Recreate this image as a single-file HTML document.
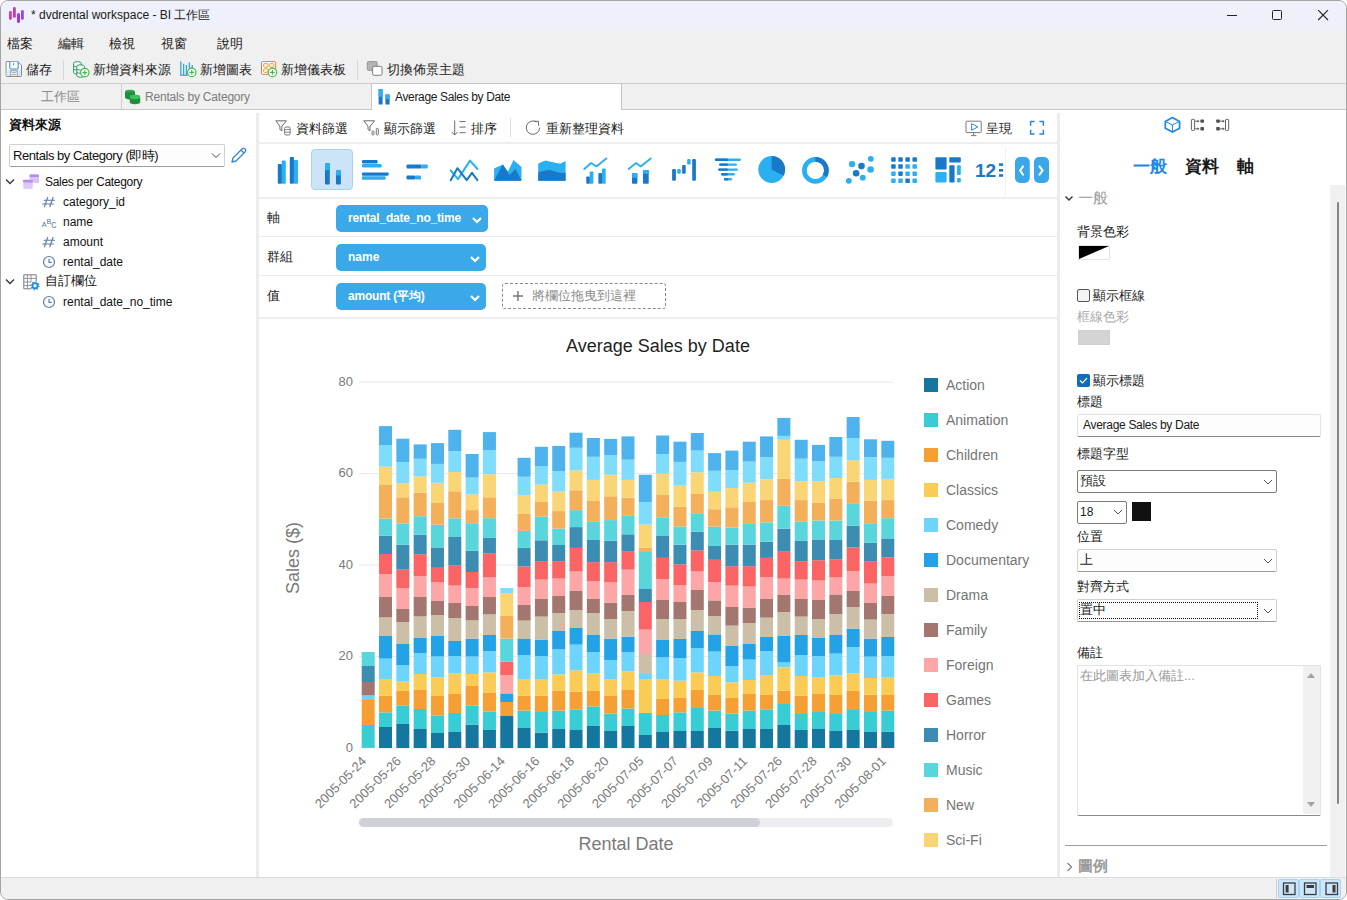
<!DOCTYPE html>
<html><head><meta charset="utf-8">
<style>
*{box-sizing:border-box;margin:0;padding:0}
html,body{width:1347px;height:900px;overflow:hidden;background:#fff}
body{font-family:"Liberation Sans",sans-serif;font-size:13px;color:#1a1a1a;position:relative}
.a{position:absolute;white-space:nowrap;line-height:1}
svg{position:absolute;overflow:visible}
.sel{position:absolute;background:#fdfdfd;border:1px solid #a8a8a8;border-radius:2px}
.chev{position:absolute;width:7px;height:7px;border-right:1px solid #555;border-bottom:1px solid #555;transform:rotate(45deg)}
</style></head><body>

<!-- window frame -->
<div class="a" style="left:0;top:0;width:1347px;height:900px;background:#fff"></div><div class="a" style="left:0;top:0;width:1347px;height:900px;background:#f0f0f0;border:1px solid #a5a5a5;border-radius:8px"></div>
<div class="a" style="left:1px;top:1px;width:1345px;height:30px;background:#eef1f9;border-radius:7px 7px 0 0"></div>
<!-- app icon -->
<svg width="1" height="1" style="left:0;top:0">
<rect x="9" y="11" width="2.8" height="9" rx="1.4" fill="#d83aa8"/>
<rect x="13" y="7" width="2.8" height="10.8" rx="1.4" fill="#c03ab8"/>
<rect x="17" y="13" width="3" height="10" rx="1.5" fill="#a834e0"/>
<rect x="21" y="10" width="2.8" height="9.8" rx="1.4" fill="#9048e8"/>
</svg>
<div class="a" style="left:31px;top:9px;font-size:12px;color:#1a1a1a">* dvdrental workspace - BI 工作區</div>
<!-- window controls -->
<div class="a" style="left:1227px;top:15px;width:10px;height:1px;background:#222"></div>
<div class="a" style="left:1272px;top:10px;width:10px;height:10px;border:1px solid #222;border-radius:1.5px"></div>
<svg width="14" height="14" style="left:1316px;top:8px"><path d="M2.2 2.2L12 12M12 2.2L2.2 12" stroke="#222" stroke-width="1.1"/></svg>
<!-- menu -->
<div class="a" style="left:7px;top:37px;font-size:13px">檔案</div>
<div class="a" style="left:58px;top:37px;font-size:13px">編輯</div>
<div class="a" style="left:109px;top:37px;font-size:13px">檢視</div>
<div class="a" style="left:161px;top:37px;font-size:13px">視窗</div>
<div class="a" style="left:217px;top:37px;font-size:13px">說明</div>
<!-- toolbar -->
<svg width="1" height="1" style="left:0;top:0">
<path d="M7 61.5H17.8L21.5 65.2V75.6Q21.5 76.5 20.6 76.5H7Q6.1 76.5 6.1 75.6V62.4Q6.1 61.5 7 61.5Z" fill="#fff" stroke="#8a8a8a" stroke-width="1"/>
<path d="M6.6 69.5H21V76H6.6Z" fill="#cdeefc"/>
<path d="M9.8 61.8V67.6Q9.8 69 11.2 69H16.8Q18.2 69 18.2 67.6V61.8" fill="#fff" stroke="#3b8fd8" stroke-width="1.1"/>
<path d="M13.6 63.2V65.2" stroke="#3b8fd8" stroke-width="1"/>
<rect x="10.8" y="70.8" width="6.4" height="5.5" fill="#fff" stroke="#8a8a8a" stroke-width="0.9"/>
<path d="M12.2 72.6H15.8M12.2 74.6H15.8" stroke="#8a8a8a" stroke-width="0.8"/>
</svg>
<div class="a" style="left:26px;top:63px;font-size:13px">儲存</div>
<div class="a" style="left:63px;top:60px;width:1px;height:20px;background:#d8d8d8"></div>
<svg width="1" height="1" style="left:0;top:0">
<path d="M73.6 63.2Q73.6 61.6 77.4 61.6Q81.2 61.6 81.2 63.2V72.6Q81.2 74.2 77.4 74.2Q73.6 74.2 73.6 72.6Z" fill="#eef5ef" stroke="#2f9a6a" stroke-width="1"/>
<path d="M73.6 66.2Q77.4 67.8 81.2 66.2M73.6 69.4Q77.4 71 81.2 69.4" fill="none" stroke="#2f9a6a" stroke-width="0.9"/>
<path d="M76.8 66.4Q76.8 64.8 80.6 64.8Q84.4 64.8 84.4 66.4V75.6Q84.4 77.2 80.6 77.2Q76.8 77.2 76.8 75.6Z" fill="#eef5ef" stroke="#2f9a6a" stroke-width="1"/>
<path d="M76.8 69.4Q80.6 71 84.4 69.4M76.8 72.6Q80.6 74.2 84.4 72.6" fill="none" stroke="#2f9a6a" stroke-width="0.9"/>
<circle cx="84.8" cy="72.6" r="4.2" fill="#fff" stroke="#46b94e" stroke-width="1.2"/>
<path d="M84.8 70.2V75M82.4 72.6H87.2" stroke="#46b94e" stroke-width="1.2"/>
</svg>
<div class="a" style="left:93px;top:63px;font-size:13px">新增資料來源</div>
<svg width="1" height="1" style="left:0;top:0">
<path d="M180.8 61.5V75M183.6 63.8V75M186.4 65V75M189.4 62.6V72M192.2 65V69" stroke="#33a6e6" stroke-width="1.3"/>
<path d="M180.2 75.2H188" stroke="#2f86d6" stroke-width="1"/>
<circle cx="191.8" cy="72.4" r="4.2" fill="#fff" stroke="#46b94e" stroke-width="1.2"/>
<path d="M191.8 70V74.8M189.4 72.4H194.2" stroke="#46b94e" stroke-width="1.2"/>
</svg>
<div class="a" style="left:200px;top:63px;font-size:13px">新增圖表</div>
<svg width="1" height="1" style="left:0;top:0">
<rect x="261.5" y="61.6" width="14.2" height="12.8" rx="1" fill="#fff" stroke="#e8784a" stroke-width="1"/>
<rect x="263.6" y="63.6" width="4.4" height="3.6" rx="0.8" fill="#fff3c8" stroke="#e89a40" stroke-width="0.9"/>
<rect x="269.4" y="63.6" width="4.4" height="3.6" rx="0.8" fill="#fff3c8" stroke="#e89a40" stroke-width="0.9"/>
<rect x="263.6" y="68.8" width="4.4" height="3.6" rx="0.8" fill="#fff3c8" stroke="#e89a40" stroke-width="0.9"/>
<circle cx="272.4" cy="72.4" r="4.2" fill="#fff" stroke="#46b94e" stroke-width="1.2"/>
<path d="M272.4 70V74.8M270 72.4H274.8" stroke="#46b94e" stroke-width="1.2"/>
</svg>
<div class="a" style="left:281px;top:63px;font-size:13px">新增儀表板</div>
<div class="a" style="left:357px;top:60px;width:1px;height:20px;background:#d8d8d8"></div>
<svg width="1" height="1" style="left:0;top:0">
<rect x="367.3" y="61.6" width="9.8" height="8.8" rx="1.2" fill="#b4b4b4" stroke="#8e8e8e" stroke-width="0.9"/>
<rect x="372.6" y="66.3" width="9.4" height="9" rx="1.6" fill="#fff" stroke="#7a7a7a" stroke-width="1"/>
</svg>
<div class="a" style="left:387px;top:63px;font-size:13px">切換佈景主題</div>
<!-- tabs -->
<div class="a" style="left:1px;top:83px;width:1345px;height:1px;background:#cfcfcf"></div>
<div class="a" style="left:1px;top:109px;width:1345px;height:1px;background:#c6c6c6"></div>
<div class="a" style="left:121px;top:84px;width:1px;height:25px;background:#d0d0d0"></div>
<div class="a" style="left:41px;top:90px;font-size:13px;color:#8a8a8a">工作區</div>
<svg width="18" height="16" style="left:124px;top:89px"><ellipse cx="6" cy="3" rx="5" ry="2.2" fill="#2aa84a"/><path d="M1 3V9Q6 12 11 9V3" fill="#1f8f3e"/><ellipse cx="11" cy="8" rx="5.2" ry="2.2" fill="#34b552"/><path d="M5.8 8V14Q11 16.5 16.2 14V8" fill="#1f8f3e"/><ellipse cx="11" cy="8" rx="5.2" ry="2.2" fill="#3cc060"/></svg>
<div class="a" style="left:145px;top:91px;font-size:12px;color:#7c7c7c;letter-spacing:-0.2px">Rentals by Category</div>
<div class="a" style="left:371px;top:83px;width:251px;height:27px;background:#fff;border:1px solid #c6c6c6;border-bottom:none"></div>
<svg width="1" height="1" style="left:0;top:0">
<rect x="378.6" y="89" width="4" height="15.5" fill="#1a78c8"/><rect x="378.6" y="89" width="4" height="7.7" fill="#33b0f0"/>
<rect x="385.4" y="94.5" width="4.2" height="10" fill="#1a78c8"/><rect x="385.4" y="94.5" width="4.2" height="4.5" fill="#33b0f0"/>
</svg>
<div class="a" style="left:395px;top:91px;font-size:12px;color:#1a1a1a;letter-spacing:-0.35px">Average Sales by Date</div>
<!-- main white -->
<div class="a" style="left:1px;top:110px;width:1345px;height:767px;background:#fff"></div>
<!-- status bar -->
<div class="a" style="left:1px;top:877px;width:1345px;height:22px;background:#f0f0f0;border-top:1px solid #dcdcdc;border-radius:0 0 7px 7px"></div>
<div class="a" style="left:1276px;top:879px;width:1px;height:19px;background:#d0d0d0"></div>
<div class="a" style="left:1278px;top:879px;width:21px;height:19px;background:#cce6fb;border:1px solid #a6d2f4;border-radius:2px"></div>
<div class="a" style="left:1299px;top:879px;width:21px;height:19px;background:#cce6fb;border:1px solid #a6d2f4;border-radius:2px"></div>
<div class="a" style="left:1320px;top:879px;width:21px;height:19px;background:#cce6fb;border:1px solid #a6d2f4;border-radius:2px"></div>
<svg width="1" height="1" style="left:0;top:0">
<rect x="1283.5" y="883" width="11.5" height="11.5" fill="none" stroke="#3c3c3c" stroke-width="1.3"/><rect x="1285.6" y="885" width="3" height="7.5" fill="#3c3c3c"/>
<rect x="1304.5" y="883" width="11.5" height="11.5" fill="none" stroke="#3c3c3c" stroke-width="1.3"/><rect x="1306.5" y="885" width="7.5" height="3" fill="#3c3c3c"/>
<rect x="1326" y="883" width="11.5" height="11.5" fill="none" stroke="#3c3c3c" stroke-width="1.3"/><rect x="1332.5" y="885" width="3" height="7.5" fill="#3c3c3c"/>
</svg>
<!-- end status -->

<!-- left panel -->
<div class="a" style="left:256px;top:113px;width:3px;height:764px;background:#ececec"></div>
<div class="a" style="left:9px;top:118px;font-size:13px;font-weight:bold;color:#111">資料來源</div>
<div class="sel" style="left:9px;top:144px;width:216px;height:23px;border-color:#d0d0d0;border-bottom-color:#9a9a9a;background:#fdfdfd"></div>
<div class="a" style="left:13px;top:149px;font-size:13px;color:#111;letter-spacing:-0.45px">Rentals by Category (即時)</div>
<svg width="12" height="8" style="left:211px;top:152px"><path d="M1 1.5L5 5.5L9 1.5" fill="none" stroke="#444" stroke-width="1"/></svg>
<svg width="18" height="18" style="left:230px;top:147px"><path d="M2 15L3 11L12.5 1.5Q13.5 0.8 14.5 1.5L15.5 2.5Q16.2 3.5 15.5 4.5L6 14Z" fill="none" stroke="#2f86d6" stroke-width="1.3" stroke-linejoin="round"/><path d="M11 3L14 6" stroke="#2f86d6" stroke-width="1.2"/></svg>
<!-- tree -->
<svg width="10" height="8" style="left:5px;top:178px"><path d="M1 1.5L5 5.5L9 1.5" fill="none" stroke="#333" stroke-width="1.3"/></svg>
<svg width="1" height="1" style="left:0;top:0">
<rect x="29.5" y="174.5" width="9.5" height="8.6" rx="1.6" fill="#d9c3f3"/>
<rect x="29.5" y="174.5" width="9.5" height="2.4" rx="1" fill="#b58ae6"/>
<rect x="23" y="179.8" width="10" height="9.4" rx="1.6" fill="#dcc8f5" stroke="#fff" stroke-width="0.6"/>
<rect x="23" y="179.8" width="10" height="2.6" rx="1" fill="#b88de8"/>
<path d="M47.8 197L44.3 207.3M53.2 197L49.7 207.3M43.6 200.3H55M42.3 204H53.7" stroke="#5d7ea6" stroke-width="1.1" fill="none"/>
<path d="M47.8 237L44.3 247.3M53.2 237L49.7 247.3M43.6 240.3H55M42.3 244H53.7" stroke="#5d7ea6" stroke-width="1.1" fill="none"/>
<text x="41.8" y="227" font-family="Liberation Mono" font-size="8" fill="#5d7ea6">A</text>
<text x="46.6" y="224" font-family="Liberation Mono" font-size="8" fill="#5d7ea6">B</text>
<text x="51.2" y="228.3" font-family="Liberation Mono" font-size="8.5" fill="#5d7ea6">C</text>
</svg>
<div class="a" style="left:45px;top:176px;font-size:12px;color:#111;letter-spacing:-0.3px">Sales per Category</div>
<div class="a" style="left:63px;top:196px;font-size:12px;color:#111">category_id</div>
<div class="a" style="left:63px;top:216px;font-size:12px;color:#111">name</div>
<div class="a" style="left:63px;top:236px;font-size:12px;color:#111">amount</div>
<svg width="14" height="14" style="left:42px;top:255px"><circle cx="7" cy="7" r="5.5" fill="none" stroke="#5a7ea8" stroke-width="1.2"/><path d="M7 3.8V7.3H9.8" fill="none" stroke="#5a7ea8" stroke-width="1.2"/></svg>
<div class="a" style="left:63px;top:256px;font-size:12px;color:#111">rental_date</div>
<svg width="10" height="8" style="left:5px;top:278px"><path d="M1 1.5L5 5.5L9 1.5" fill="none" stroke="#333" stroke-width="1.3"/></svg>
<svg width="1" height="1" style="left:0;top:0">
<path d="M23.8 274.8H36.2V281M23.8 274.8V288.8H31" fill="none" stroke="#7a7a7a" stroke-width="1"/>
<path d="M23.8 278.4H36.2M23.8 282H31M23.8 285.5H31M27.4 274.8V288.8M31 274.8V282" stroke="#8a8a8a" stroke-width="0.9"/>
<circle cx="35" cy="285.8" r="2.6" fill="none" stroke="#1e88e5" stroke-width="1.8"/>
<circle cx="35" cy="285.8" r="4" fill="none" stroke="#1e88e5" stroke-width="1.2" stroke-dasharray="1.4 1.74"/>
</svg>
<div class="a" style="left:45px;top:274px;font-size:13px;color:#111">自訂欄位</div>
<svg width="14" height="14" style="left:42px;top:295px"><circle cx="7" cy="7" r="5.5" fill="none" stroke="#5a7ea8" stroke-width="1.2"/><path d="M7 3.8V7.3H9.8" fill="none" stroke="#5a7ea8" stroke-width="1.2"/></svg>
<div class="a" style="left:63px;top:296px;font-size:12px;color:#111">rental_date_no_time</div>

<!-- center toolbar -->
<svg width="1347" height="900" style="left:0;top:0">
<path d="M275.8 120.8H286.4L281.9 126.2V130.8L279.9 129.5V126.2Z" fill="none" stroke="#6a6a6a" stroke-width="1" stroke-linejoin="round"/>
<rect x="284.6" y="127" width="5.6" height="8" rx="1.5" fill="#fff" stroke="#6a6a6a" stroke-width="0.9"/>
<path d="M284.8 129.6H290M284.8 132.2H290" stroke="#6a6a6a" stroke-width="0.8"/>
<path d="M363.8 120.8H374.6L370 126.2V130.8L368 129.5V126.2Z" fill="none" stroke="#6a6a6a" stroke-width="1" stroke-linejoin="round"/>
<rect x="372" y="131" width="2" height="4" rx="0.8" fill="none" stroke="#6a6a6a" stroke-width="0.9"/>
<rect x="376.3" y="128.3" width="2" height="6.7" rx="0.8" fill="none" stroke="#6a6a6a" stroke-width="0.9"/>
<path d="M454.7 120.5V135M451.8 132L454.7 135L457.6 132" fill="none" stroke="#6a6a6a" stroke-width="1"/>
<path d="M459.5 121.6H465.6M459.5 127.1H465.6M459.5 132.7H465.6" stroke="#6a6a6a" stroke-width="1"/>
<path d="M539.6 127.7A6.7 6.7 0 1 1 536.5 122" fill="none" stroke="#6a6a6a" stroke-width="1"/>
<path d="M534 121.2L538.5 121.3L538.6 125.8" fill="none" stroke="#6a6a6a" stroke-width="1"/>
<rect x="966" y="121.2" width="15.2" height="11.4" rx="0.8" fill="none" stroke="#7a7a7a" stroke-width="1"/>
<path d="M973.6 132.8V135.5M971 135.6H976.4" stroke="#7a7a7a" stroke-width="1"/>
<path d="M971.6 123.6V130.2L977.8 126.9Z" fill="none" stroke="#2f86d6" stroke-width="1" stroke-linejoin="round"/>
<path d="M1030.6 125.8V121.6H1034.6M1039.4 121.6H1043.4V125.8M1043.4 129.8V134H1039.4M1034.6 134H1030.6V129.8" fill="none" stroke="#2f86d6" stroke-width="1.5"/>
<rect x="510" y="118" width="1" height="19" fill="#dedede"/>
</svg>
<div class="a" style="left:296px;top:122px;font-size:13px">資料篩選</div>
<div class="a" style="left:384px;top:122px;font-size:13px">顯示篩選</div>
<div class="a" style="left:471px;top:122px;font-size:13px">排序</div>
<div class="a" style="left:546px;top:122px;font-size:13px">重新整理資料</div>
<div class="a" style="left:986px;top:122px;font-size:13px">呈現</div>
<div class="a" style="left:1057px;top:113px;width:3px;height:764px;background:#ececec"></div>
<div class="a" style="left:259px;top:142px;width:798px;height:2px;background:#eeeeee"></div>
<div class="a" style="left:259px;top:197px;width:798px;height:2px;background:#eeeeee"></div>
<!-- chart types -->
<div class="a" style="left:311px;top:149px;width:42px;height:41px;background:#cce4f7;border:1px solid #a9d1f2;border-radius:4px"></div>
<svg width="1347" height="900" style="left:0;top:0">
<g>
<rect x="277.8" y="164" width="4.2" height="19.7" rx="1" fill="#1a78c8"/>
<rect x="281.7" y="160.5" width="4.1" height="23.2" rx="1" fill="#2ab0f0"/>
<rect x="289.8" y="157" width="4.2" height="26.7" rx="1" fill="#1a78c8"/>
<rect x="293.8" y="160" width="4.2" height="23.7" rx="1" fill="#2ab0f0"/>
</g>
<g>
<rect x="325" y="163" width="4.8" height="21.5" rx="1" fill="#1a78c8"/>
<rect x="325" y="163" width="4.8" height="7.3" rx="1" fill="#2ab0f0"/>
<rect x="336" y="170.3" width="4.9" height="14.2" rx="1" fill="#1a78c8"/>
<rect x="336" y="170.3" width="4.9" height="5.3" rx="1" fill="#2ab0f0"/>
</g>
<g>
<rect x="362" y="160" width="15.6" height="3.4" rx="1" fill="#1a78c8"/>
<rect x="362" y="164" width="19.7" height="3.6" rx="1" fill="#2ab0f0"/>
<rect x="362" y="172.4" width="26.6" height="3.4" rx="1" fill="#1a78c8"/>
<rect x="362" y="176.3" width="23.6" height="3.4" rx="1" fill="#2ab0f0"/>
</g>
<g>
<rect x="406.5" y="164.6" width="15" height="3.9" rx="1" fill="#1a78c8"/>
<rect x="421.2" y="164.6" width="6.6" height="3.9" rx="1" fill="#2ab0f0"/>
<rect x="406.5" y="175.5" width="8.7" height="4" rx="1" fill="#1a78c8"/>
<rect x="415" y="175.5" width="6" height="4" rx="1" fill="#2ab0f0"/>
</g>
<path d="M450.7 170.4L458 179.1L470 160.6L477.4 169" fill="none" stroke="#2ab0f0" stroke-width="2" stroke-linejoin="round" stroke-linecap="round"/>
<path d="M450.7 180.2L457.4 168.2L466.7 180.2L472 172.8L477.4 180.2" fill="none" stroke="#1a78c8" stroke-width="2" stroke-linejoin="round" stroke-linecap="round"/>
<path d="M494.1 168.4L502.8 164.4L508 171.5L513.5 160L521.5 167V180.8H494.1Z" fill="#2ab0f0"/>
<path d="M494.1 180.8L502.8 164.4L509.5 175L515.5 169L521.5 180.8Z" fill="#1a78c8"/>
<path d="M538.2 163.7Q541 161.5 545.6 160.4Q553 162 560.3 163.7Q563 162 565.6 161.3V180.8H538.2Z" fill="#2ab0f0"/>
<path d="M538.2 172.4Q544 170.6 549.6 170.1Q555 171.8 560.3 173.1L565.6 172.8V180.8H538.2Z" fill="#1a78c8"/>
<path d="M584.3 169L591 163L596.4 166.4L606.4 158.4" fill="none" stroke="#2ab0f0" stroke-width="1.9" stroke-linecap="round" stroke-linejoin="round"/>
<rect x="586.3" y="176.4" width="3.6" height="7.4" rx="0.8" fill="#1a78c8"/>
<rect x="589.7" y="171.5" width="3.7" height="12.3" rx="0.8" fill="#2ab0f0"/>
<rect x="598.4" y="173" width="3.6" height="10.8" rx="0.8" fill="#1a78c8"/>
<rect x="602" y="168.4" width="3.7" height="15.4" rx="0.8" fill="#2ab0f0"/>
<path d="M628.7 169L636 163L640.7 166.4L650.7 158.4" fill="none" stroke="#2ab0f0" stroke-width="1.9" stroke-linecap="round" stroke-linejoin="round"/>
<rect x="632" y="173.3" width="5.4" height="10.5" rx="0.8" fill="#1a78c8"/>
<rect x="632" y="173.3" width="5.4" height="4.4" rx="0.8" fill="#2ab0f0"/>
<rect x="643" y="170" width="5.7" height="13.8" rx="0.8" fill="#1a78c8"/>
<rect x="643" y="170" width="5.7" height="3.7" rx="0.8" fill="#2ab0f0"/>
<rect x="672.1" y="169" width="3.8" height="11.8" rx="1.2" fill="#1a78c8"/>
<rect x="677.2" y="169" width="3.6" height="4.7" rx="1.2" fill="#2ab0f0"/>
<rect x="682.1" y="165" width="3.6" height="8.7" rx="1.2" fill="#1a78c8"/>
<rect x="687.2" y="159" width="3.4" height="5.4" rx="1.2" fill="#2ab0f0"/>
<rect x="692.2" y="159" width="3.7" height="21.8" rx="1.2" fill="#1a78c8"/>
<rect x="714.9" y="158.4" width="26" height="2.5" rx="1.2" fill="#2ab0f0"/><rect x="714.9" y="158.4" width="13.1" height="2.5" rx="1.2" fill="#1a78c8"/>
<rect x="719.2" y="163.4" width="17.8" height="2.4" rx="1.2" fill="#2ab0f0"/><rect x="719.2" y="163.4" width="8.8" height="2.4" rx="1.2" fill="#1a78c8"/>
<rect x="718.2" y="168.4" width="19.7" height="2.4" rx="1.2" fill="#2ab0f0"/><rect x="718.2" y="168.4" width="9.8" height="2.4" rx="1.2" fill="#1a78c8"/>
<rect x="721.2" y="173" width="13.7" height="2.5" rx="1.2" fill="#2ab0f0"/><rect x="721.2" y="173" width="6.8" height="2.5" rx="1.2" fill="#1a78c8"/>
<rect x="724" y="178.1" width="8" height="2.4" rx="1.2" fill="#2ab0f0"/><rect x="724" y="178.1" width="4" height="2.4" rx="1.2" fill="#1a78c8"/>
<circle cx="771.7" cy="169.5" r="13.4" fill="#2ab0f0"/>
<path d="M771.7 169.5V156.1A13.4 13.4 0 0 1 783.5 175.8Z" fill="#1a78c8"/>
<circle cx="815.4" cy="170.4" r="11" fill="none" stroke="#2ab0f0" stroke-width="4.7"/>
<path d="M815.4 159.4A11 11 0 0 1 824.9 175.9" fill="none" stroke="#1a78c8" stroke-width="4.7"/>
<circle cx="870.8" cy="158.8" r="2.9" fill="#2ab0f0"/>
<circle cx="852.1" cy="164.1" r="3.2" fill="#2ab0f0"/>
<circle cx="861.5" cy="166.1" r="3.3" fill="#1a78c8"/>
<circle cx="870.6" cy="169.5" r="3.3" fill="#2ab0f0"/>
<circle cx="856.1" cy="173.3" r="3.3" fill="#1a78c8"/>
<circle cx="862.8" cy="177.7" r="2.9" fill="#2ab0f0"/>
<circle cx="848.8" cy="180.8" r="2.9" fill="#2ab0f0"/>
<rect x="891.20" y="157.30" width="4.5" height="4.5" rx="0.8" fill="#1a78c8"/><rect x="898.28" y="157.30" width="4.5" height="4.5" rx="0.8" fill="#1a78c8"/><rect x="905.36" y="157.30" width="4.5" height="4.5" rx="0.8" fill="#1a78c8"/><rect x="912.44" y="157.30" width="4.5" height="4.5" rx="0.8" fill="#1a78c8"/><rect x="891.20" y="164.35" width="4.5" height="4.5" rx="0.8" fill="#1a78c8"/><rect x="898.28" y="164.35" width="4.5" height="4.5" rx="0.8" fill="#1a78c8"/><rect x="905.36" y="164.35" width="4.5" height="4.5" rx="0.8" fill="#2ab0f0"/><rect x="912.44" y="164.35" width="4.5" height="4.5" rx="0.8" fill="#2ab0f0"/><rect x="891.20" y="171.40" width="4.5" height="4.5" rx="0.8" fill="#2ab0f0"/><rect x="898.28" y="171.40" width="4.5" height="4.5" rx="0.8" fill="#1a78c8"/><rect x="905.36" y="171.40" width="4.5" height="4.5" rx="0.8" fill="#2ab0f0"/><rect x="912.44" y="171.40" width="4.5" height="4.5" rx="0.8" fill="#2ab0f0"/><rect x="891.20" y="178.45" width="4.5" height="4.5" rx="0.8" fill="#2ab0f0"/><rect x="898.28" y="178.45" width="4.5" height="4.5" rx="0.8" fill="#2ab0f0"/><rect x="905.36" y="178.45" width="4.5" height="4.5" rx="0.8" fill="#1a78c8"/><rect x="912.44" y="178.45" width="4.5" height="4.5" rx="0.8" fill="#2ab0f0"/>
<rect x="935.4" y="157.3" width="11.2" height="12.2" rx="1" fill="#1a78c8"/>
<rect x="935.4" y="172.1" width="11.2" height="10.3" rx="1" fill="#2ab0f0"/>
<rect x="949.3" y="157.3" width="11.5" height="5.1" rx="1" fill="#1a78c8"/>
<rect x="949.3" y="165.3" width="5.3" height="17.1" rx="1" fill="#1a78c8"/>
<rect x="957" y="165.3" width="3.8" height="9.7" rx="1" fill="#2ab0f0"/>
<rect x="957" y="178.1" width="3.8" height="4.3" rx="1" fill="#2ab0f0"/>
<text x="975" y="176.7" font-family="Liberation Sans" font-weight="bold" font-size="19" fill="#1a78c8">12</text>
<rect x="999" y="163.3" width="4" height="2.6" fill="#1a78c8"/><rect x="999" y="169" width="4" height="2.6" fill="#1a78c8"/><rect x="999" y="174.2" width="4" height="2.6" fill="#1a78c8"/>
<rect x="1005" y="146.3" width="1" height="49" fill="#f0f0f0"/>
<rect x="1015" y="157" width="14.8" height="25.9" rx="5" fill="#3aa8e8"/>
<rect x="1034" y="157" width="15" height="25.9" rx="5" fill="#3aa8e8"/>
<path d="M1023 166.4L1020.1 170.6L1023 174.6" fill="none" stroke="#fff" stroke-width="2" stroke-linecap="round"/>
<path d="M1039.5 166.4L1042.6 170.6L1039.5 174.6" fill="none" stroke="#fff" stroke-width="2" stroke-linecap="round"/>
</svg>
<!-- fields -->
<div class="a" style="left:267px;top:211px;font-size:13px">軸</div>
<div class="a" style="left:267px;top:250px;font-size:13px">群組</div>
<div class="a" style="left:267px;top:289px;font-size:13px">值</div>
<div class="a" style="left:259px;top:236px;width:798px;height:1px;background:#ebebeb"></div>
<div class="a" style="left:259px;top:275px;width:798px;height:1px;background:#ebebeb"></div>
<div class="a" style="left:259px;top:317px;width:798px;height:2px;background:#eeeeee"></div>
<div class="a" style="left:336px;top:205px;width:152px;height:27px;background:#3aa9e9;border-radius:5px"></div>
<div class="a" style="left:348px;top:212px;font-size:12px;font-weight:bold;color:#fff;letter-spacing:-0.2px">rental_date_no_time</div>
<div class="a" style="left:336px;top:244px;width:150px;height:27px;background:#3aa9e9;border-radius:5px"></div>
<div class="a" style="left:348px;top:251px;font-size:12px;font-weight:bold;color:#fff">name</div>
<div class="a" style="left:336px;top:283px;width:150px;height:27px;background:#3aa9e9;border-radius:5px"></div>
<div class="a" style="left:348px;top:290px;font-size:12px;font-weight:bold;color:#fff;letter-spacing:-0.2px">amount (平均)</div>
<svg width="10" height="8" style="left:472px;top:216px"><path d="M1 2L5 6L9 2" fill="none" stroke="#fff" stroke-width="2.2"/></svg>
<svg width="10" height="8" style="left:470px;top:255px"><path d="M1 2L5 6L9 2" fill="none" stroke="#fff" stroke-width="2.2"/></svg>
<svg width="10" height="8" style="left:470px;top:294px"><path d="M1 2L5 6L9 2" fill="none" stroke="#fff" stroke-width="2.2"/></svg>
<div class="a" style="left:502px;top:283px;width:164px;height:26px;border:1px dashed #8a8a8a;border-radius:3px"></div>
<svg width="12" height="12" style="left:512px;top:290px"><path d="M6 1V11M1 6H11" stroke="#777" stroke-width="1.4"/></svg>
<div class="a" style="left:532px;top:289px;font-size:13px;color:#8c8c8c">將欄位拖曳到這裡</div>

<svg width="1347" height="900" style="left:0;top:0;pointer-events:none">
<text x="658" y="352" text-anchor="middle" font-family="Liberation Sans" font-size="18" fill="#1f1f1f">Average Sales by Date</text>
<rect x="359" y="747.50" width="534" height="1" fill="#e8e8ec"/>
<text x="353" y="751.60" text-anchor="end" font-family="Liberation Sans" font-size="13" fill="#7a7a7a">0</text>
<rect x="359" y="656.05" width="534" height="1" fill="#e8e8ec"/>
<text x="353" y="660.15" text-anchor="end" font-family="Liberation Sans" font-size="13" fill="#7a7a7a">20</text>
<rect x="359" y="564.60" width="534" height="1" fill="#e8e8ec"/>
<text x="353" y="568.70" text-anchor="end" font-family="Liberation Sans" font-size="13" fill="#7a7a7a">40</text>
<rect x="359" y="473.15" width="534" height="1" fill="#e8e8ec"/>
<text x="353" y="477.25" text-anchor="end" font-family="Liberation Sans" font-size="13" fill="#7a7a7a">60</text>
<rect x="359" y="381.70" width="534" height="1" fill="#e8e8ec"/>
<text x="353" y="385.80" text-anchor="end" font-family="Liberation Sans" font-size="13" fill="#7a7a7a">80</text>
<rect x="361.70" y="747.60" width="13" height="0.40" fill="#15779e"/>
<rect x="361.70" y="725.00" width="13" height="22.60" fill="#38cdd4"/>
<rect x="361.70" y="700.00" width="13" height="25.00" fill="#f59f34"/>
<rect x="361.70" y="695.40" width="13" height="4.60" fill="#6dd4fb"/>
<rect x="361.70" y="682.00" width="13" height="13.40" fill="#a3776f"/>
<rect x="361.70" y="666.00" width="13" height="16.00" fill="#3d8cb2"/>
<rect x="361.70" y="652.00" width="13" height="14.00" fill="#58d6db"/>
<rect x="379.02" y="727.00" width="13" height="21.00" fill="#15779e"/>
<rect x="379.02" y="712.40" width="13" height="14.60" fill="#38cdd4"/>
<rect x="379.02" y="695.60" width="13" height="16.80" fill="#f59f34"/>
<rect x="379.02" y="679.00" width="13" height="16.60" fill="#facb55"/>
<rect x="379.02" y="658.60" width="13" height="20.40" fill="#6dd4fb"/>
<rect x="379.02" y="636.00" width="13" height="22.60" fill="#24a2e6"/>
<rect x="379.02" y="617.40" width="13" height="18.60" fill="#cbbfa8"/>
<rect x="379.02" y="597.00" width="13" height="20.40" fill="#a3776f"/>
<rect x="379.02" y="574.00" width="13" height="23.00" fill="#fca6a8"/>
<rect x="379.02" y="554.00" width="13" height="20.00" fill="#fb6464"/>
<rect x="379.02" y="535.70" width="13" height="18.30" fill="#3d8cb2"/>
<rect x="379.02" y="518.70" width="13" height="17.00" fill="#58d6db"/>
<rect x="379.02" y="485.00" width="13" height="33.70" fill="#f4af5a"/>
<rect x="379.02" y="466.70" width="13" height="18.30" fill="#f9d576"/>
<rect x="379.02" y="445.00" width="13" height="21.70" fill="#80dcfb"/>
<rect x="379.02" y="426.10" width="13" height="18.90" fill="#4eb3ed"/>
<rect x="396.34" y="724.00" width="13" height="24.00" fill="#15779e"/>
<rect x="396.34" y="705.40" width="13" height="18.60" fill="#38cdd4"/>
<rect x="396.34" y="691.00" width="13" height="14.40" fill="#f59f34"/>
<rect x="396.34" y="681.60" width="13" height="9.40" fill="#facb55"/>
<rect x="396.34" y="665.00" width="13" height="16.60" fill="#6dd4fb"/>
<rect x="396.34" y="644.00" width="13" height="21.00" fill="#24a2e6"/>
<rect x="396.34" y="622.00" width="13" height="22.00" fill="#cbbfa8"/>
<rect x="396.34" y="609.00" width="13" height="13.00" fill="#a3776f"/>
<rect x="396.34" y="588.40" width="13" height="20.60" fill="#fca6a8"/>
<rect x="396.34" y="569.60" width="13" height="18.80" fill="#fb6464"/>
<rect x="396.34" y="544.80" width="13" height="24.80" fill="#3d8cb2"/>
<rect x="396.34" y="523.40" width="13" height="21.40" fill="#58d6db"/>
<rect x="396.34" y="497.30" width="13" height="26.10" fill="#f4af5a"/>
<rect x="396.34" y="483.30" width="13" height="14.00" fill="#f9d576"/>
<rect x="396.34" y="462.00" width="13" height="21.30" fill="#80dcfb"/>
<rect x="396.34" y="438.70" width="13" height="23.30" fill="#4eb3ed"/>
<rect x="413.66" y="729.00" width="13" height="19.00" fill="#15779e"/>
<rect x="413.66" y="709.00" width="13" height="20.00" fill="#38cdd4"/>
<rect x="413.66" y="690.00" width="13" height="19.00" fill="#f59f34"/>
<rect x="413.66" y="674.00" width="13" height="16.00" fill="#facb55"/>
<rect x="413.66" y="653.00" width="13" height="21.00" fill="#6dd4fb"/>
<rect x="413.66" y="638.00" width="13" height="15.00" fill="#24a2e6"/>
<rect x="413.66" y="616.40" width="13" height="21.60" fill="#cbbfa8"/>
<rect x="413.66" y="597.00" width="13" height="19.40" fill="#a3776f"/>
<rect x="413.66" y="576.00" width="13" height="21.00" fill="#fca6a8"/>
<rect x="413.66" y="554.20" width="13" height="21.80" fill="#fb6464"/>
<rect x="413.66" y="534.80" width="13" height="19.40" fill="#3d8cb2"/>
<rect x="413.66" y="516.20" width="13" height="18.60" fill="#58d6db"/>
<rect x="413.66" y="492.80" width="13" height="23.40" fill="#f4af5a"/>
<rect x="413.66" y="476.50" width="13" height="16.30" fill="#f9d576"/>
<rect x="413.66" y="458.80" width="13" height="17.70" fill="#80dcfb"/>
<rect x="413.66" y="444.40" width="13" height="14.40" fill="#4eb3ed"/>
<rect x="430.98" y="733.00" width="13" height="15.00" fill="#15779e"/>
<rect x="430.98" y="715.40" width="13" height="17.60" fill="#38cdd4"/>
<rect x="430.98" y="696.00" width="13" height="19.40" fill="#f59f34"/>
<rect x="430.98" y="677.40" width="13" height="18.60" fill="#facb55"/>
<rect x="430.98" y="656.40" width="13" height="21.00" fill="#6dd4fb"/>
<rect x="430.98" y="636.00" width="13" height="20.40" fill="#24a2e6"/>
<rect x="430.98" y="615.00" width="13" height="21.00" fill="#cbbfa8"/>
<rect x="430.98" y="601.00" width="13" height="14.00" fill="#a3776f"/>
<rect x="430.98" y="582.40" width="13" height="18.60" fill="#fca6a8"/>
<rect x="430.98" y="567.80" width="13" height="14.60" fill="#fb6464"/>
<rect x="430.98" y="547.40" width="13" height="20.40" fill="#3d8cb2"/>
<rect x="430.98" y="524.70" width="13" height="22.70" fill="#58d6db"/>
<rect x="430.98" y="503.00" width="13" height="21.70" fill="#f4af5a"/>
<rect x="430.98" y="482.80" width="13" height="20.20" fill="#f9d576"/>
<rect x="430.98" y="463.90" width="13" height="18.90" fill="#80dcfb"/>
<rect x="430.98" y="443.10" width="13" height="20.80" fill="#4eb3ed"/>
<rect x="448.30" y="732.00" width="13" height="16.00" fill="#15779e"/>
<rect x="448.30" y="713.00" width="13" height="19.00" fill="#38cdd4"/>
<rect x="448.30" y="694.00" width="13" height="19.00" fill="#f59f34"/>
<rect x="448.30" y="673.60" width="13" height="20.40" fill="#facb55"/>
<rect x="448.30" y="656.00" width="13" height="17.60" fill="#6dd4fb"/>
<rect x="448.30" y="641.00" width="13" height="15.00" fill="#24a2e6"/>
<rect x="448.30" y="618.00" width="13" height="23.00" fill="#cbbfa8"/>
<rect x="448.30" y="603.00" width="13" height="15.00" fill="#a3776f"/>
<rect x="448.30" y="585.60" width="13" height="17.40" fill="#fca6a8"/>
<rect x="448.30" y="565.60" width="13" height="20.00" fill="#fb6464"/>
<rect x="448.30" y="537.00" width="13" height="28.60" fill="#3d8cb2"/>
<rect x="448.30" y="518.30" width="13" height="18.70" fill="#58d6db"/>
<rect x="448.30" y="491.30" width="13" height="27.00" fill="#f4af5a"/>
<rect x="448.30" y="472.00" width="13" height="19.30" fill="#f9d576"/>
<rect x="448.30" y="451.20" width="13" height="20.80" fill="#80dcfb"/>
<rect x="448.30" y="429.80" width="13" height="21.40" fill="#4eb3ed"/>
<rect x="465.62" y="724.60" width="13" height="23.40" fill="#15779e"/>
<rect x="465.62" y="705.60" width="13" height="19.00" fill="#38cdd4"/>
<rect x="465.62" y="686.00" width="13" height="19.60" fill="#f59f34"/>
<rect x="465.62" y="674.00" width="13" height="12.00" fill="#facb55"/>
<rect x="465.62" y="656.40" width="13" height="17.60" fill="#6dd4fb"/>
<rect x="465.62" y="638.60" width="13" height="17.80" fill="#24a2e6"/>
<rect x="465.62" y="620.40" width="13" height="18.20" fill="#cbbfa8"/>
<rect x="465.62" y="606.00" width="13" height="14.40" fill="#a3776f"/>
<rect x="465.62" y="588.00" width="13" height="18.00" fill="#fca6a8"/>
<rect x="465.62" y="572.00" width="13" height="16.00" fill="#fb6464"/>
<rect x="465.62" y="550.70" width="13" height="21.30" fill="#3d8cb2"/>
<rect x="465.62" y="523.90" width="13" height="26.80" fill="#58d6db"/>
<rect x="465.62" y="510.10" width="13" height="13.80" fill="#f4af5a"/>
<rect x="465.62" y="494.40" width="13" height="15.70" fill="#f9d576"/>
<rect x="465.62" y="477.60" width="13" height="16.80" fill="#80dcfb"/>
<rect x="465.62" y="454.00" width="13" height="23.60" fill="#4eb3ed"/>
<rect x="482.94" y="730.00" width="13" height="18.00" fill="#15779e"/>
<rect x="482.94" y="711.60" width="13" height="18.40" fill="#38cdd4"/>
<rect x="482.94" y="693.00" width="13" height="18.60" fill="#f59f34"/>
<rect x="482.94" y="672.40" width="13" height="20.60" fill="#facb55"/>
<rect x="482.94" y="651.00" width="13" height="21.40" fill="#6dd4fb"/>
<rect x="482.94" y="635.00" width="13" height="16.00" fill="#24a2e6"/>
<rect x="482.94" y="614.40" width="13" height="20.60" fill="#cbbfa8"/>
<rect x="482.94" y="597.00" width="13" height="17.40" fill="#a3776f"/>
<rect x="482.94" y="577.40" width="13" height="19.60" fill="#fca6a8"/>
<rect x="482.94" y="553.20" width="13" height="24.20" fill="#fb6464"/>
<rect x="482.94" y="537.90" width="13" height="15.30" fill="#3d8cb2"/>
<rect x="482.94" y="518.20" width="13" height="19.70" fill="#58d6db"/>
<rect x="482.94" y="497.30" width="13" height="20.90" fill="#f4af5a"/>
<rect x="482.94" y="474.20" width="13" height="23.10" fill="#f9d576"/>
<rect x="482.94" y="450.00" width="13" height="24.20" fill="#80dcfb"/>
<rect x="482.94" y="432.10" width="13" height="17.90" fill="#4eb3ed"/>
<rect x="500.26" y="716.00" width="13" height="32.00" fill="#15779e"/>
<rect x="500.26" y="702.00" width="13" height="14.00" fill="#f59f34"/>
<rect x="500.26" y="693.40" width="13" height="8.60" fill="#24a2e6"/>
<rect x="500.26" y="675.00" width="13" height="18.40" fill="#fca6a8"/>
<rect x="500.26" y="661.60" width="13" height="13.40" fill="#fb6464"/>
<rect x="500.26" y="638.60" width="13" height="23.00" fill="#58d6db"/>
<rect x="500.26" y="616.00" width="13" height="22.60" fill="#f4af5a"/>
<rect x="500.26" y="593.00" width="13" height="23.00" fill="#f9d576"/>
<rect x="500.26" y="588.00" width="13" height="5.00" fill="#80dcfb"/>
<rect x="517.58" y="728.00" width="13" height="20.00" fill="#15779e"/>
<rect x="517.58" y="710.60" width="13" height="17.40" fill="#38cdd4"/>
<rect x="517.58" y="695.60" width="13" height="15.00" fill="#f59f34"/>
<rect x="517.58" y="679.60" width="13" height="16.00" fill="#facb55"/>
<rect x="517.58" y="655.00" width="13" height="24.60" fill="#6dd4fb"/>
<rect x="517.58" y="639.00" width="13" height="16.00" fill="#24a2e6"/>
<rect x="517.58" y="620.60" width="13" height="18.40" fill="#cbbfa8"/>
<rect x="517.58" y="605.00" width="13" height="15.60" fill="#a3776f"/>
<rect x="517.58" y="587.00" width="13" height="18.00" fill="#fca6a8"/>
<rect x="517.58" y="566.40" width="13" height="20.60" fill="#fb6464"/>
<rect x="517.58" y="547.90" width="13" height="18.50" fill="#3d8cb2"/>
<rect x="517.58" y="530.90" width="13" height="17.00" fill="#58d6db"/>
<rect x="517.58" y="513.50" width="13" height="17.40" fill="#f4af5a"/>
<rect x="517.58" y="495.00" width="13" height="18.50" fill="#f9d576"/>
<rect x="517.58" y="476.70" width="13" height="18.30" fill="#80dcfb"/>
<rect x="517.58" y="457.80" width="13" height="18.90" fill="#4eb3ed"/>
<rect x="534.90" y="732.60" width="13" height="15.40" fill="#15779e"/>
<rect x="534.90" y="712.00" width="13" height="20.60" fill="#38cdd4"/>
<rect x="534.90" y="695.60" width="13" height="16.40" fill="#f59f34"/>
<rect x="534.90" y="679.00" width="13" height="16.60" fill="#facb55"/>
<rect x="534.90" y="656.00" width="13" height="23.00" fill="#6dd4fb"/>
<rect x="534.90" y="639.60" width="13" height="16.40" fill="#24a2e6"/>
<rect x="534.90" y="616.60" width="13" height="23.00" fill="#cbbfa8"/>
<rect x="534.90" y="599.00" width="13" height="17.60" fill="#a3776f"/>
<rect x="534.90" y="579.60" width="13" height="19.40" fill="#fca6a8"/>
<rect x="534.90" y="561.10" width="13" height="18.50" fill="#fb6464"/>
<rect x="534.90" y="540.30" width="13" height="20.80" fill="#3d8cb2"/>
<rect x="534.90" y="516.70" width="13" height="23.60" fill="#58d6db"/>
<rect x="534.90" y="502.00" width="13" height="14.70" fill="#f4af5a"/>
<rect x="534.90" y="484.60" width="13" height="17.40" fill="#f9d576"/>
<rect x="534.90" y="466.10" width="13" height="18.50" fill="#80dcfb"/>
<rect x="534.90" y="446.80" width="13" height="19.30" fill="#4eb3ed"/>
<rect x="552.22" y="729.00" width="13" height="19.00" fill="#15779e"/>
<rect x="552.22" y="710.60" width="13" height="18.40" fill="#38cdd4"/>
<rect x="552.22" y="691.00" width="13" height="19.60" fill="#f59f34"/>
<rect x="552.22" y="674.40" width="13" height="16.60" fill="#facb55"/>
<rect x="552.22" y="649.40" width="13" height="25.00" fill="#6dd4fb"/>
<rect x="552.22" y="631.00" width="13" height="18.40" fill="#24a2e6"/>
<rect x="552.22" y="613.00" width="13" height="18.00" fill="#cbbfa8"/>
<rect x="552.22" y="596.00" width="13" height="17.00" fill="#a3776f"/>
<rect x="552.22" y="578.60" width="13" height="17.40" fill="#fca6a8"/>
<rect x="552.22" y="561.10" width="13" height="17.50" fill="#fb6464"/>
<rect x="552.22" y="545.00" width="13" height="16.10" fill="#3d8cb2"/>
<rect x="552.22" y="528.60" width="13" height="16.40" fill="#58d6db"/>
<rect x="552.22" y="511.10" width="13" height="17.50" fill="#f4af5a"/>
<rect x="552.22" y="491.60" width="13" height="19.50" fill="#f9d576"/>
<rect x="552.22" y="471.00" width="13" height="20.60" fill="#80dcfb"/>
<rect x="552.22" y="445.90" width="13" height="25.10" fill="#4eb3ed"/>
<rect x="569.54" y="730.00" width="13" height="18.00" fill="#15779e"/>
<rect x="569.54" y="709.60" width="13" height="20.40" fill="#38cdd4"/>
<rect x="569.54" y="691.60" width="13" height="18.00" fill="#f59f34"/>
<rect x="569.54" y="670.40" width="13" height="21.20" fill="#facb55"/>
<rect x="569.54" y="644.60" width="13" height="25.80" fill="#6dd4fb"/>
<rect x="569.54" y="628.00" width="13" height="16.60" fill="#24a2e6"/>
<rect x="569.54" y="610.00" width="13" height="18.00" fill="#cbbfa8"/>
<rect x="569.54" y="591.00" width="13" height="19.00" fill="#a3776f"/>
<rect x="569.54" y="571.50" width="13" height="19.50" fill="#fca6a8"/>
<rect x="569.54" y="547.90" width="13" height="23.60" fill="#fb6464"/>
<rect x="569.54" y="527.10" width="13" height="20.80" fill="#3d8cb2"/>
<rect x="569.54" y="510.10" width="13" height="17.00" fill="#58d6db"/>
<rect x="569.54" y="490.30" width="13" height="19.80" fill="#f4af5a"/>
<rect x="569.54" y="470.40" width="13" height="19.90" fill="#f9d576"/>
<rect x="569.54" y="447.80" width="13" height="22.60" fill="#80dcfb"/>
<rect x="569.54" y="432.70" width="13" height="15.10" fill="#4eb3ed"/>
<rect x="586.86" y="726.00" width="13" height="22.00" fill="#15779e"/>
<rect x="586.86" y="706.40" width="13" height="19.60" fill="#38cdd4"/>
<rect x="586.86" y="691.00" width="13" height="15.40" fill="#f59f34"/>
<rect x="586.86" y="673.60" width="13" height="17.40" fill="#facb55"/>
<rect x="586.86" y="652.00" width="13" height="21.60" fill="#6dd4fb"/>
<rect x="586.86" y="635.00" width="13" height="17.00" fill="#24a2e6"/>
<rect x="586.86" y="613.00" width="13" height="22.00" fill="#cbbfa8"/>
<rect x="586.86" y="599.00" width="13" height="14.00" fill="#a3776f"/>
<rect x="586.86" y="581.40" width="13" height="17.60" fill="#fca6a8"/>
<rect x="586.86" y="562.10" width="13" height="19.30" fill="#fb6464"/>
<rect x="586.86" y="540.00" width="13" height="22.10" fill="#3d8cb2"/>
<rect x="586.86" y="521.80" width="13" height="18.20" fill="#58d6db"/>
<rect x="586.86" y="501.00" width="13" height="20.80" fill="#f4af5a"/>
<rect x="586.86" y="479.90" width="13" height="21.10" fill="#f9d576"/>
<rect x="586.86" y="456.80" width="13" height="23.10" fill="#80dcfb"/>
<rect x="586.86" y="438.00" width="13" height="18.80" fill="#4eb3ed"/>
<rect x="604.18" y="731.00" width="13" height="17.00" fill="#15779e"/>
<rect x="604.18" y="713.60" width="13" height="17.40" fill="#38cdd4"/>
<rect x="604.18" y="696.00" width="13" height="17.60" fill="#f59f34"/>
<rect x="604.18" y="679.00" width="13" height="17.00" fill="#facb55"/>
<rect x="604.18" y="660.00" width="13" height="19.00" fill="#6dd4fb"/>
<rect x="604.18" y="638.60" width="13" height="21.40" fill="#24a2e6"/>
<rect x="604.18" y="619.00" width="13" height="19.60" fill="#cbbfa8"/>
<rect x="604.18" y="602.60" width="13" height="16.40" fill="#a3776f"/>
<rect x="604.18" y="582.40" width="13" height="20.20" fill="#fca6a8"/>
<rect x="604.18" y="562.10" width="13" height="20.30" fill="#fb6464"/>
<rect x="604.18" y="540.70" width="13" height="21.40" fill="#3d8cb2"/>
<rect x="604.18" y="520.10" width="13" height="20.60" fill="#58d6db"/>
<rect x="604.18" y="496.30" width="13" height="23.80" fill="#f4af5a"/>
<rect x="604.18" y="474.80" width="13" height="21.50" fill="#f9d576"/>
<rect x="604.18" y="455.00" width="13" height="19.80" fill="#80dcfb"/>
<rect x="604.18" y="438.90" width="13" height="16.10" fill="#4eb3ed"/>
<rect x="621.50" y="726.00" width="13" height="22.00" fill="#15779e"/>
<rect x="621.50" y="708.60" width="13" height="17.40" fill="#38cdd4"/>
<rect x="621.50" y="690.00" width="13" height="18.60" fill="#f59f34"/>
<rect x="621.50" y="671.40" width="13" height="18.60" fill="#facb55"/>
<rect x="621.50" y="652.00" width="13" height="19.40" fill="#6dd4fb"/>
<rect x="621.50" y="636.60" width="13" height="15.40" fill="#24a2e6"/>
<rect x="621.50" y="611.00" width="13" height="25.60" fill="#cbbfa8"/>
<rect x="621.50" y="595.00" width="13" height="16.00" fill="#a3776f"/>
<rect x="621.50" y="569.60" width="13" height="25.40" fill="#fca6a8"/>
<rect x="621.50" y="551.70" width="13" height="17.90" fill="#fb6464"/>
<rect x="621.50" y="534.30" width="13" height="17.40" fill="#3d8cb2"/>
<rect x="621.50" y="515.80" width="13" height="18.50" fill="#58d6db"/>
<rect x="621.50" y="497.80" width="13" height="18.00" fill="#f4af5a"/>
<rect x="621.50" y="479.90" width="13" height="17.90" fill="#f9d576"/>
<rect x="621.50" y="459.70" width="13" height="20.20" fill="#80dcfb"/>
<rect x="621.50" y="436.40" width="13" height="23.30" fill="#4eb3ed"/>
<rect x="638.82" y="735.00" width="13" height="13.00" fill="#15779e"/>
<rect x="638.82" y="713.00" width="13" height="22.00" fill="#38cdd4"/>
<rect x="638.82" y="679.00" width="13" height="34.00" fill="#facb55"/>
<rect x="638.82" y="674.00" width="13" height="5.00" fill="#6dd4fb"/>
<rect x="638.82" y="654.00" width="13" height="20.00" fill="#cbbfa8"/>
<rect x="638.82" y="629.60" width="13" height="24.40" fill="#fca6a8"/>
<rect x="638.82" y="602.00" width="13" height="27.60" fill="#fb6464"/>
<rect x="638.82" y="589.00" width="13" height="13.00" fill="#3d8cb2"/>
<rect x="638.82" y="552.00" width="13" height="37.00" fill="#58d6db"/>
<rect x="638.82" y="547.90" width="13" height="4.10" fill="#f4af5a"/>
<rect x="638.82" y="524.70" width="13" height="23.20" fill="#f9d576"/>
<rect x="638.82" y="502.00" width="13" height="22.70" fill="#80dcfb"/>
<rect x="638.82" y="474.80" width="13" height="27.20" fill="#4eb3ed"/>
<rect x="656.14" y="732.00" width="13" height="16.00" fill="#15779e"/>
<rect x="656.14" y="715.00" width="13" height="17.00" fill="#38cdd4"/>
<rect x="656.14" y="699.00" width="13" height="16.00" fill="#f59f34"/>
<rect x="656.14" y="679.60" width="13" height="19.40" fill="#facb55"/>
<rect x="656.14" y="657.40" width="13" height="22.20" fill="#6dd4fb"/>
<rect x="656.14" y="640.00" width="13" height="17.40" fill="#24a2e6"/>
<rect x="656.14" y="619.00" width="13" height="21.00" fill="#cbbfa8"/>
<rect x="656.14" y="600.00" width="13" height="19.00" fill="#a3776f"/>
<rect x="656.14" y="579.00" width="13" height="21.00" fill="#fca6a8"/>
<rect x="656.14" y="557.90" width="13" height="21.10" fill="#fb6464"/>
<rect x="656.14" y="536.00" width="13" height="21.90" fill="#3d8cb2"/>
<rect x="656.14" y="517.30" width="13" height="18.70" fill="#58d6db"/>
<rect x="656.14" y="495.00" width="13" height="22.30" fill="#f4af5a"/>
<rect x="656.14" y="473.80" width="13" height="21.20" fill="#f9d576"/>
<rect x="656.14" y="454.00" width="13" height="19.80" fill="#80dcfb"/>
<rect x="656.14" y="435.50" width="13" height="18.50" fill="#4eb3ed"/>
<rect x="673.46" y="731.00" width="13" height="17.00" fill="#15779e"/>
<rect x="673.46" y="712.40" width="13" height="18.60" fill="#38cdd4"/>
<rect x="673.46" y="698.00" width="13" height="14.40" fill="#f59f34"/>
<rect x="673.46" y="680.60" width="13" height="17.40" fill="#facb55"/>
<rect x="673.46" y="658.00" width="13" height="22.60" fill="#6dd4fb"/>
<rect x="673.46" y="639.00" width="13" height="19.00" fill="#24a2e6"/>
<rect x="673.46" y="619.00" width="13" height="20.00" fill="#cbbfa8"/>
<rect x="673.46" y="602.00" width="13" height="17.00" fill="#a3776f"/>
<rect x="673.46" y="585.00" width="13" height="17.00" fill="#fca6a8"/>
<rect x="673.46" y="564.30" width="13" height="20.70" fill="#fb6464"/>
<rect x="673.46" y="544.70" width="13" height="19.60" fill="#3d8cb2"/>
<rect x="673.46" y="526.50" width="13" height="18.20" fill="#58d6db"/>
<rect x="673.46" y="506.70" width="13" height="19.80" fill="#f4af5a"/>
<rect x="673.46" y="485.00" width="13" height="21.70" fill="#f9d576"/>
<rect x="673.46" y="461.90" width="13" height="23.10" fill="#80dcfb"/>
<rect x="673.46" y="441.70" width="13" height="20.20" fill="#4eb3ed"/>
<rect x="690.78" y="731.00" width="13" height="17.00" fill="#15779e"/>
<rect x="690.78" y="708.00" width="13" height="23.00" fill="#38cdd4"/>
<rect x="690.78" y="690.00" width="13" height="18.00" fill="#f59f34"/>
<rect x="690.78" y="672.40" width="13" height="17.60" fill="#facb55"/>
<rect x="690.78" y="648.00" width="13" height="24.40" fill="#6dd4fb"/>
<rect x="690.78" y="631.00" width="13" height="17.00" fill="#24a2e6"/>
<rect x="690.78" y="610.00" width="13" height="21.00" fill="#cbbfa8"/>
<rect x="690.78" y="590.00" width="13" height="20.00" fill="#a3776f"/>
<rect x="690.78" y="571.50" width="13" height="18.50" fill="#fca6a8"/>
<rect x="690.78" y="550.30" width="13" height="21.20" fill="#fb6464"/>
<rect x="690.78" y="531.80" width="13" height="18.50" fill="#3d8cb2"/>
<rect x="690.78" y="513.90" width="13" height="17.90" fill="#58d6db"/>
<rect x="690.78" y="494.00" width="13" height="19.90" fill="#f4af5a"/>
<rect x="690.78" y="472.30" width="13" height="21.70" fill="#f9d576"/>
<rect x="690.78" y="450.60" width="13" height="21.70" fill="#80dcfb"/>
<rect x="690.78" y="433.00" width="13" height="17.60" fill="#4eb3ed"/>
<rect x="708.10" y="728.00" width="13" height="20.00" fill="#15779e"/>
<rect x="708.10" y="710.60" width="13" height="17.40" fill="#38cdd4"/>
<rect x="708.10" y="695.00" width="13" height="15.60" fill="#f59f34"/>
<rect x="708.10" y="676.00" width="13" height="19.00" fill="#facb55"/>
<rect x="708.10" y="651.60" width="13" height="24.40" fill="#6dd4fb"/>
<rect x="708.10" y="634.40" width="13" height="17.20" fill="#24a2e6"/>
<rect x="708.10" y="616.00" width="13" height="18.40" fill="#cbbfa8"/>
<rect x="708.10" y="600.40" width="13" height="15.60" fill="#a3776f"/>
<rect x="708.10" y="582.00" width="13" height="18.40" fill="#fca6a8"/>
<rect x="708.10" y="559.80" width="13" height="22.20" fill="#fb6464"/>
<rect x="708.10" y="546.00" width="13" height="13.80" fill="#3d8cb2"/>
<rect x="708.10" y="526.70" width="13" height="19.30" fill="#58d6db"/>
<rect x="708.10" y="509.20" width="13" height="17.50" fill="#f4af5a"/>
<rect x="708.10" y="491.80" width="13" height="17.40" fill="#f9d576"/>
<rect x="708.10" y="470.80" width="13" height="21.00" fill="#80dcfb"/>
<rect x="708.10" y="453.10" width="13" height="17.70" fill="#4eb3ed"/>
<rect x="725.42" y="730.60" width="13" height="17.40" fill="#15779e"/>
<rect x="725.42" y="713.60" width="13" height="17.00" fill="#38cdd4"/>
<rect x="725.42" y="698.00" width="13" height="15.60" fill="#f59f34"/>
<rect x="725.42" y="682.40" width="13" height="15.60" fill="#facb55"/>
<rect x="725.42" y="666.00" width="13" height="16.40" fill="#6dd4fb"/>
<rect x="725.42" y="646.00" width="13" height="20.00" fill="#24a2e6"/>
<rect x="725.42" y="625.60" width="13" height="20.40" fill="#cbbfa8"/>
<rect x="725.42" y="607.00" width="13" height="18.60" fill="#a3776f"/>
<rect x="725.42" y="585.60" width="13" height="21.40" fill="#fca6a8"/>
<rect x="725.42" y="566.20" width="13" height="19.40" fill="#fb6464"/>
<rect x="725.42" y="544.70" width="13" height="21.50" fill="#3d8cb2"/>
<rect x="725.42" y="527.50" width="13" height="17.20" fill="#58d6db"/>
<rect x="725.42" y="507.30" width="13" height="20.20" fill="#f4af5a"/>
<rect x="725.42" y="488.00" width="13" height="19.30" fill="#f9d576"/>
<rect x="725.42" y="470.00" width="13" height="18.00" fill="#80dcfb"/>
<rect x="725.42" y="450.60" width="13" height="19.40" fill="#4eb3ed"/>
<rect x="742.74" y="729.00" width="13" height="19.00" fill="#15779e"/>
<rect x="742.74" y="710.60" width="13" height="18.40" fill="#38cdd4"/>
<rect x="742.74" y="694.00" width="13" height="16.60" fill="#f59f34"/>
<rect x="742.74" y="680.00" width="13" height="14.00" fill="#facb55"/>
<rect x="742.74" y="659.60" width="13" height="20.40" fill="#6dd4fb"/>
<rect x="742.74" y="644.00" width="13" height="15.60" fill="#24a2e6"/>
<rect x="742.74" y="623.00" width="13" height="21.00" fill="#cbbfa8"/>
<rect x="742.74" y="607.60" width="13" height="15.40" fill="#a3776f"/>
<rect x="742.74" y="586.60" width="13" height="21.00" fill="#fca6a8"/>
<rect x="742.74" y="566.20" width="13" height="20.40" fill="#fb6464"/>
<rect x="742.74" y="544.70" width="13" height="21.50" fill="#3d8cb2"/>
<rect x="742.74" y="523.90" width="13" height="20.80" fill="#58d6db"/>
<rect x="742.74" y="502.00" width="13" height="21.90" fill="#f4af5a"/>
<rect x="742.74" y="482.70" width="13" height="19.30" fill="#f9d576"/>
<rect x="742.74" y="461.60" width="13" height="21.10" fill="#80dcfb"/>
<rect x="742.74" y="441.70" width="13" height="19.90" fill="#4eb3ed"/>
<rect x="760.06" y="729.00" width="13" height="19.00" fill="#15779e"/>
<rect x="760.06" y="709.40" width="13" height="19.60" fill="#38cdd4"/>
<rect x="760.06" y="695.00" width="13" height="14.40" fill="#f59f34"/>
<rect x="760.06" y="675.00" width="13" height="20.00" fill="#facb55"/>
<rect x="760.06" y="651.00" width="13" height="24.00" fill="#6dd4fb"/>
<rect x="760.06" y="637.00" width="13" height="14.00" fill="#24a2e6"/>
<rect x="760.06" y="617.60" width="13" height="19.40" fill="#cbbfa8"/>
<rect x="760.06" y="599.00" width="13" height="18.60" fill="#a3776f"/>
<rect x="760.06" y="577.00" width="13" height="22.00" fill="#fca6a8"/>
<rect x="760.06" y="557.90" width="13" height="19.10" fill="#fb6464"/>
<rect x="760.06" y="541.70" width="13" height="16.20" fill="#3d8cb2"/>
<rect x="760.06" y="522.40" width="13" height="19.30" fill="#58d6db"/>
<rect x="760.06" y="500.10" width="13" height="22.30" fill="#f4af5a"/>
<rect x="760.06" y="479.30" width="13" height="20.80" fill="#f9d576"/>
<rect x="760.06" y="457.20" width="13" height="22.10" fill="#80dcfb"/>
<rect x="760.06" y="436.40" width="13" height="20.80" fill="#4eb3ed"/>
<rect x="777.38" y="725.00" width="13" height="23.00" fill="#15779e"/>
<rect x="777.38" y="704.00" width="13" height="21.00" fill="#38cdd4"/>
<rect x="777.38" y="690.60" width="13" height="13.40" fill="#f59f34"/>
<rect x="777.38" y="667.40" width="13" height="23.20" fill="#facb55"/>
<rect x="777.38" y="662.40" width="13" height="5.00" fill="#6dd4fb"/>
<rect x="777.38" y="636.00" width="13" height="26.40" fill="#24a2e6"/>
<rect x="777.38" y="612.00" width="13" height="24.00" fill="#cbbfa8"/>
<rect x="777.38" y="595.00" width="13" height="17.00" fill="#a3776f"/>
<rect x="777.38" y="578.60" width="13" height="16.40" fill="#fca6a8"/>
<rect x="777.38" y="551.70" width="13" height="26.90" fill="#fb6464"/>
<rect x="777.38" y="528.60" width="13" height="23.10" fill="#3d8cb2"/>
<rect x="777.38" y="505.80" width="13" height="22.80" fill="#58d6db"/>
<rect x="777.38" y="478.90" width="13" height="26.90" fill="#f4af5a"/>
<rect x="777.38" y="439.80" width="13" height="39.10" fill="#f9d576"/>
<rect x="777.38" y="435.90" width="13" height="3.90" fill="#80dcfb"/>
<rect x="777.38" y="417.90" width="13" height="18.00" fill="#4eb3ed"/>
<rect x="794.70" y="730.00" width="13" height="18.00" fill="#15779e"/>
<rect x="794.70" y="714.00" width="13" height="16.00" fill="#38cdd4"/>
<rect x="794.70" y="695.60" width="13" height="18.40" fill="#f59f34"/>
<rect x="794.70" y="676.00" width="13" height="19.60" fill="#facb55"/>
<rect x="794.70" y="655.00" width="13" height="21.00" fill="#6dd4fb"/>
<rect x="794.70" y="635.00" width="13" height="20.00" fill="#24a2e6"/>
<rect x="794.70" y="616.60" width="13" height="18.40" fill="#cbbfa8"/>
<rect x="794.70" y="599.00" width="13" height="17.60" fill="#a3776f"/>
<rect x="794.70" y="579.60" width="13" height="19.40" fill="#fca6a8"/>
<rect x="794.70" y="561.10" width="13" height="18.50" fill="#fb6464"/>
<rect x="794.70" y="540.90" width="13" height="20.20" fill="#3d8cb2"/>
<rect x="794.70" y="521.40" width="13" height="19.50" fill="#58d6db"/>
<rect x="794.70" y="500.10" width="13" height="21.30" fill="#f4af5a"/>
<rect x="794.70" y="481.20" width="13" height="18.90" fill="#f9d576"/>
<rect x="794.70" y="458.70" width="13" height="22.50" fill="#80dcfb"/>
<rect x="794.70" y="439.80" width="13" height="18.90" fill="#4eb3ed"/>
<rect x="812.02" y="729.00" width="13" height="19.00" fill="#15779e"/>
<rect x="812.02" y="712.00" width="13" height="17.00" fill="#38cdd4"/>
<rect x="812.02" y="694.00" width="13" height="18.00" fill="#f59f34"/>
<rect x="812.02" y="677.00" width="13" height="17.00" fill="#facb55"/>
<rect x="812.02" y="656.00" width="13" height="21.00" fill="#6dd4fb"/>
<rect x="812.02" y="638.00" width="13" height="18.00" fill="#24a2e6"/>
<rect x="812.02" y="619.00" width="13" height="19.00" fill="#cbbfa8"/>
<rect x="812.02" y="600.00" width="13" height="19.00" fill="#a3776f"/>
<rect x="812.02" y="580.60" width="13" height="19.40" fill="#fca6a8"/>
<rect x="812.02" y="560.20" width="13" height="20.40" fill="#fb6464"/>
<rect x="812.02" y="539.40" width="13" height="20.80" fill="#3d8cb2"/>
<rect x="812.02" y="520.50" width="13" height="18.90" fill="#58d6db"/>
<rect x="812.02" y="502.90" width="13" height="17.60" fill="#f4af5a"/>
<rect x="812.02" y="481.20" width="13" height="21.70" fill="#f9d576"/>
<rect x="812.02" y="461.40" width="13" height="19.80" fill="#80dcfb"/>
<rect x="812.02" y="444.90" width="13" height="16.50" fill="#4eb3ed"/>
<rect x="829.34" y="731.00" width="13" height="17.00" fill="#15779e"/>
<rect x="829.34" y="714.00" width="13" height="17.00" fill="#38cdd4"/>
<rect x="829.34" y="695.00" width="13" height="19.00" fill="#f59f34"/>
<rect x="829.34" y="675.40" width="13" height="19.60" fill="#facb55"/>
<rect x="829.34" y="653.60" width="13" height="21.80" fill="#6dd4fb"/>
<rect x="829.34" y="635.00" width="13" height="18.60" fill="#24a2e6"/>
<rect x="829.34" y="614.00" width="13" height="21.00" fill="#cbbfa8"/>
<rect x="829.34" y="594.40" width="13" height="19.60" fill="#a3776f"/>
<rect x="829.34" y="577.40" width="13" height="17.00" fill="#fca6a8"/>
<rect x="829.34" y="559.20" width="13" height="18.20" fill="#fb6464"/>
<rect x="829.34" y="540.00" width="13" height="19.20" fill="#3d8cb2"/>
<rect x="829.34" y="520.50" width="13" height="19.50" fill="#58d6db"/>
<rect x="829.34" y="498.80" width="13" height="21.70" fill="#f4af5a"/>
<rect x="829.34" y="478.00" width="13" height="20.80" fill="#f9d576"/>
<rect x="829.34" y="456.80" width="13" height="21.20" fill="#80dcfb"/>
<rect x="829.34" y="437.00" width="13" height="19.80" fill="#4eb3ed"/>
<rect x="846.66" y="730.00" width="13" height="18.00" fill="#15779e"/>
<rect x="846.66" y="710.00" width="13" height="20.00" fill="#38cdd4"/>
<rect x="846.66" y="691.00" width="13" height="19.00" fill="#f59f34"/>
<rect x="846.66" y="673.40" width="13" height="17.60" fill="#facb55"/>
<rect x="846.66" y="647.00" width="13" height="26.40" fill="#6dd4fb"/>
<rect x="846.66" y="628.60" width="13" height="18.40" fill="#24a2e6"/>
<rect x="846.66" y="607.00" width="13" height="21.60" fill="#cbbfa8"/>
<rect x="846.66" y="591.00" width="13" height="16.00" fill="#a3776f"/>
<rect x="846.66" y="571.10" width="13" height="19.90" fill="#fca6a8"/>
<rect x="846.66" y="547.50" width="13" height="23.60" fill="#fb6464"/>
<rect x="846.66" y="525.80" width="13" height="21.70" fill="#3d8cb2"/>
<rect x="846.66" y="503.90" width="13" height="21.90" fill="#58d6db"/>
<rect x="846.66" y="481.80" width="13" height="22.10" fill="#f4af5a"/>
<rect x="846.66" y="460.40" width="13" height="21.40" fill="#f9d576"/>
<rect x="846.66" y="438.00" width="13" height="22.40" fill="#80dcfb"/>
<rect x="846.66" y="417.00" width="13" height="21.00" fill="#4eb3ed"/>
<rect x="863.98" y="732.00" width="13" height="16.00" fill="#15779e"/>
<rect x="863.98" y="712.00" width="13" height="20.00" fill="#38cdd4"/>
<rect x="863.98" y="694.60" width="13" height="17.40" fill="#f59f34"/>
<rect x="863.98" y="678.00" width="13" height="16.60" fill="#facb55"/>
<rect x="863.98" y="656.60" width="13" height="21.40" fill="#6dd4fb"/>
<rect x="863.98" y="638.60" width="13" height="18.00" fill="#24a2e6"/>
<rect x="863.98" y="619.60" width="13" height="19.00" fill="#cbbfa8"/>
<rect x="863.98" y="603.00" width="13" height="16.60" fill="#a3776f"/>
<rect x="863.98" y="583.60" width="13" height="19.40" fill="#fca6a8"/>
<rect x="863.98" y="561.70" width="13" height="21.90" fill="#fb6464"/>
<rect x="863.98" y="542.80" width="13" height="18.90" fill="#3d8cb2"/>
<rect x="863.98" y="523.90" width="13" height="18.90" fill="#58d6db"/>
<rect x="863.98" y="500.70" width="13" height="23.20" fill="#f4af5a"/>
<rect x="863.98" y="479.90" width="13" height="20.80" fill="#f9d576"/>
<rect x="863.98" y="457.20" width="13" height="22.70" fill="#80dcfb"/>
<rect x="863.98" y="439.30" width="13" height="17.90" fill="#4eb3ed"/>
<rect x="881.30" y="731.60" width="13" height="16.40" fill="#15779e"/>
<rect x="881.30" y="710.60" width="13" height="21.00" fill="#38cdd4"/>
<rect x="881.30" y="695.00" width="13" height="15.60" fill="#f59f34"/>
<rect x="881.30" y="677.00" width="13" height="18.00" fill="#facb55"/>
<rect x="881.30" y="656.00" width="13" height="21.00" fill="#6dd4fb"/>
<rect x="881.30" y="637.00" width="13" height="19.00" fill="#24a2e6"/>
<rect x="881.30" y="614.00" width="13" height="23.00" fill="#cbbfa8"/>
<rect x="881.30" y="596.00" width="13" height="18.00" fill="#a3776f"/>
<rect x="881.30" y="576.20" width="13" height="19.80" fill="#fca6a8"/>
<rect x="881.30" y="557.30" width="13" height="18.90" fill="#fb6464"/>
<rect x="881.30" y="538.40" width="13" height="18.90" fill="#3d8cb2"/>
<rect x="881.30" y="518.20" width="13" height="20.20" fill="#58d6db"/>
<rect x="881.30" y="500.10" width="13" height="18.10" fill="#f4af5a"/>
<rect x="881.30" y="478.90" width="13" height="21.20" fill="#f9d576"/>
<rect x="881.30" y="457.80" width="13" height="21.10" fill="#80dcfb"/>
<rect x="881.30" y="440.80" width="13" height="17.00" fill="#4eb3ed"/>
<text transform="translate(367.20,762) rotate(-45)" text-anchor="end" font-family="Liberation Sans" font-size="13" fill="#7a7a7a">2005-05-24</text>
<text transform="translate(401.84,762) rotate(-45)" text-anchor="end" font-family="Liberation Sans" font-size="13" fill="#7a7a7a">2005-05-26</text>
<text transform="translate(436.48,762) rotate(-45)" text-anchor="end" font-family="Liberation Sans" font-size="13" fill="#7a7a7a">2005-05-28</text>
<text transform="translate(471.12,762) rotate(-45)" text-anchor="end" font-family="Liberation Sans" font-size="13" fill="#7a7a7a">2005-05-30</text>
<text transform="translate(505.76,762) rotate(-45)" text-anchor="end" font-family="Liberation Sans" font-size="13" fill="#7a7a7a">2005-06-14</text>
<text transform="translate(540.40,762) rotate(-45)" text-anchor="end" font-family="Liberation Sans" font-size="13" fill="#7a7a7a">2005-06-16</text>
<text transform="translate(575.04,762) rotate(-45)" text-anchor="end" font-family="Liberation Sans" font-size="13" fill="#7a7a7a">2005-06-18</text>
<text transform="translate(609.68,762) rotate(-45)" text-anchor="end" font-family="Liberation Sans" font-size="13" fill="#7a7a7a">2005-06-20</text>
<text transform="translate(644.32,762) rotate(-45)" text-anchor="end" font-family="Liberation Sans" font-size="13" fill="#7a7a7a">2005-07-05</text>
<text transform="translate(678.96,762) rotate(-45)" text-anchor="end" font-family="Liberation Sans" font-size="13" fill="#7a7a7a">2005-07-07</text>
<text transform="translate(713.60,762) rotate(-45)" text-anchor="end" font-family="Liberation Sans" font-size="13" fill="#7a7a7a">2005-07-09</text>
<text transform="translate(748.24,762) rotate(-45)" text-anchor="end" font-family="Liberation Sans" font-size="13" fill="#7a7a7a">2005-07-11</text>
<text transform="translate(782.88,762) rotate(-45)" text-anchor="end" font-family="Liberation Sans" font-size="13" fill="#7a7a7a">2005-07-26</text>
<text transform="translate(817.52,762) rotate(-45)" text-anchor="end" font-family="Liberation Sans" font-size="13" fill="#7a7a7a">2005-07-28</text>
<text transform="translate(852.16,762) rotate(-45)" text-anchor="end" font-family="Liberation Sans" font-size="13" fill="#7a7a7a">2005-07-30</text>
<text transform="translate(886.80,762) rotate(-45)" text-anchor="end" font-family="Liberation Sans" font-size="13" fill="#7a7a7a">2005-08-01</text>
<text transform="translate(299,558) rotate(-90)" text-anchor="middle" font-family="Liberation Sans" font-size="18" fill="#7a7a7a">Sales ($)</text>
<text x="626" y="850" text-anchor="middle" font-family="Liberation Sans" font-size="18" fill="#7a7a7a">Rental Date</text>
<rect x="359" y="818" width="534" height="9" rx="4.5" fill="#ededf2"/>
<rect x="359" y="818" width="401" height="9" rx="4.5" fill="#d0d0d8"/>
<rect x="924" y="378" width="14" height="14" fill="#15779e"/>
<text x="946" y="390" font-family="Liberation Sans" font-size="14" fill="#757575">Action</text>
<rect x="924" y="413" width="14" height="14" fill="#38cdd4"/>
<text x="946" y="425" font-family="Liberation Sans" font-size="14" fill="#757575">Animation</text>
<rect x="924" y="448" width="14" height="14" fill="#f59f34"/>
<text x="946" y="460" font-family="Liberation Sans" font-size="14" fill="#757575">Children</text>
<rect x="924" y="483" width="14" height="14" fill="#facb55"/>
<text x="946" y="495" font-family="Liberation Sans" font-size="14" fill="#757575">Classics</text>
<rect x="924" y="518" width="14" height="14" fill="#6dd4fb"/>
<text x="946" y="530" font-family="Liberation Sans" font-size="14" fill="#757575">Comedy</text>
<rect x="924" y="553" width="14" height="14" fill="#24a2e6"/>
<text x="946" y="565" font-family="Liberation Sans" font-size="14" fill="#757575">Documentary</text>
<rect x="924" y="588" width="14" height="14" fill="#cbbfa8"/>
<text x="946" y="600" font-family="Liberation Sans" font-size="14" fill="#757575">Drama</text>
<rect x="924" y="623" width="14" height="14" fill="#a3776f"/>
<text x="946" y="635" font-family="Liberation Sans" font-size="14" fill="#757575">Family</text>
<rect x="924" y="658" width="14" height="14" fill="#fca6a8"/>
<text x="946" y="670" font-family="Liberation Sans" font-size="14" fill="#757575">Foreign</text>
<rect x="924" y="693" width="14" height="14" fill="#fb6464"/>
<text x="946" y="705" font-family="Liberation Sans" font-size="14" fill="#757575">Games</text>
<rect x="924" y="728" width="14" height="14" fill="#3d8cb2"/>
<text x="946" y="740" font-family="Liberation Sans" font-size="14" fill="#757575">Horror</text>
<rect x="924" y="763" width="14" height="14" fill="#58d6db"/>
<text x="946" y="775" font-family="Liberation Sans" font-size="14" fill="#757575">Music</text>
<rect x="924" y="798" width="14" height="14" fill="#f4af5a"/>
<text x="946" y="810" font-family="Liberation Sans" font-size="14" fill="#757575">New</text>
<rect x="924" y="833" width="14" height="14" fill="#f9d576"/>
<text x="946" y="845" font-family="Liberation Sans" font-size="14" fill="#757575">Sci-Fi</text>
</svg>
<!-- right panel -->
<svg width="1" height="1" style="left:0;top:0">
<path d="M1172.4 117.6L1179.6 121.5V128.2L1172.4 132.1L1165.3 128.2V121.5Z" fill="none" stroke="#1e88e5" stroke-width="1.7" stroke-linejoin="round"/>
<path d="M1165.6 121.6L1172.4 124.9L1179.3 121.6M1172.4 124.9V131.8" fill="none" stroke="#1e88e5" stroke-width="1"/>
<rect x="1191.4" y="119.4" width="3.2" height="11" rx="0.8" fill="#fff" stroke="#606060" stroke-width="1"/>
<path d="M1194.6 121.2H1198.6M1194.6 128.8H1198.6" stroke="#606060" stroke-width="0.9"/>
<path d="M1197.6 120.2L1199.2 121.2L1197.6 122.2ZM1197.6 127.8L1199.2 128.8L1197.6 129.8Z" fill="#606060" stroke="#606060" stroke-width="0.5"/>
<rect x="1200.4" y="119.5" width="3.6" height="3.3" rx="0.7" fill="#505050"/>
<rect x="1200.4" y="127.1" width="3.6" height="3.3" rx="0.7" fill="#505050"/>
<rect x="1216.2" y="119.5" width="3.6" height="3.3" rx="0.7" fill="#505050"/>
<rect x="1216.2" y="127.1" width="3.6" height="3.3" rx="0.7" fill="#505050"/>
<path d="M1219.8 121.2H1223.8M1219.8 128.8H1223.8" stroke="#606060" stroke-width="0.9"/>
<path d="M1222.8 120.2L1224.4 121.2L1222.8 122.2ZM1222.8 127.8L1224.4 128.8L1222.8 129.8Z" fill="#606060" stroke="#606060" stroke-width="0.5"/>
<rect x="1225.5" y="119.4" width="3.2" height="11" rx="0.8" fill="#fff" stroke="#606060" stroke-width="1"/>
</svg>
<div class="a" style="left:1133px;top:158px;font-size:17px;font-weight:bold;color:#1e88e5">一般</div>
<div class="a" style="left:1185px;top:158px;font-size:17px;font-weight:bold;color:#1a1a1a">資料</div>
<div class="a" style="left:1237px;top:158px;font-size:17px;font-weight:bold;color:#1a1a1a">軸</div>
<!-- inner scrollbar -->
<div class="a" style="left:1330px;top:185px;width:15px;height:692px;background:#f0f0f0"></div>
<div class="a" style="left:1337px;top:202px;width:2px;height:602px;background:#858585;border-radius:1px"></div>
<svg width="10" height="8" style="left:1064px;top:195px"><path d="M1.5 1.5L5 5L8.5 1.5" fill="none" stroke="#333" stroke-width="1.4"/></svg>
<div class="a" style="left:1078px;top:190px;font-size:15px;color:#9a9a9a">一般</div>
<div class="a" style="left:1077px;top:225px;font-size:13px">背景色彩</div>
<div class="a" style="left:1078px;top:245px;width:32px;height:15px;border:1px solid #e6e6e6;background:#fff"></div>
<svg width="32" height="15" style="left:1078px;top:245px"><path d="M1 1H31L1 14Z" fill="#000"/></svg>
<div class="a" style="left:1077px;top:289px;width:13px;height:13px;border:1px solid #555;border-radius:2px;background:#f4f4f4"></div>
<div class="a" style="left:1093px;top:289px;font-size:13px">顯示框線</div>
<div class="a" style="left:1077px;top:310px;font-size:13px;color:#a8a8a8">框線色彩</div>
<div class="a" style="left:1078px;top:330px;width:32px;height:15px;background:#d4d4d4;border:1px solid #cfcfcf"></div>
<div class="a" style="left:1077px;top:374px;width:13px;height:13px;border-radius:2px;background:#0f6cbd"></div>
<svg width="13" height="13" style="left:1077px;top:374px"><path d="M3 6.5L5.5 9L10 4" fill="none" stroke="#fff" stroke-width="1.2"/></svg>
<div class="a" style="left:1093px;top:374px;font-size:13px">顯示標題</div>
<div class="a" style="left:1077px;top:395px;font-size:13px">標題</div>
<div class="a" style="left:1077px;top:414px;width:244px;height:23px;background:#fdfdfd;border:1px solid #e2e2e2;border-bottom:1px solid #8a8a8a;border-radius:2px"></div>
<div class="a" style="left:1083px;top:419px;font-size:12px;letter-spacing:-0.3px">Average Sales by Date</div>
<div class="a" style="left:1077px;top:447px;font-size:13px">標題字型</div>
<div class="sel" style="left:1077px;top:470px;width:200px;height:23px;border-color:#7a7a7a;background:#fff"></div>
<div class="a" style="left:1080px;top:474px;font-size:13px">預設</div>
<svg width="10" height="7" style="left:1263px;top:479px"><path d="M1 1L5 5L9 1" fill="none" stroke="#555" stroke-width="1"/></svg>
<div class="sel" style="left:1077px;top:501px;width:50px;height:23px;border-color:#7a7a7a;background:#fff"></div>
<div class="a" style="left:1080px;top:506px;font-size:12px">18</div>
<svg width="10" height="7" style="left:1113px;top:509px"><path d="M1 1L5 5L9 1" fill="none" stroke="#555" stroke-width="1"/></svg>
<div class="a" style="left:1132px;top:502px;width:19px;height:19px;background:#111"></div>
<div class="a" style="left:1077px;top:530px;font-size:13px">位置</div>
<div class="sel" style="left:1077px;top:549px;width:200px;height:23px;border-color:#d0d0d0;border-bottom-color:#9a9a9a"></div>
<div class="a" style="left:1080px;top:553px;font-size:13px">上</div>
<svg width="10" height="7" style="left:1263px;top:558px"><path d="M1 1L5 5L9 1" fill="none" stroke="#555" stroke-width="1"/></svg>
<div class="a" style="left:1077px;top:580px;font-size:13px">對齊方式</div>
<div class="sel" style="left:1077px;top:599px;width:200px;height:23px;border-color:#d0d0d0;border-bottom-color:#9a9a9a"></div>
<div class="a" style="left:1079px;top:602px;width:179px;height:17px;border:1px dotted #111"></div>
<div class="a" style="left:1080px;top:603px;font-size:13px">置中</div>
<svg width="10" height="7" style="left:1263px;top:608px"><path d="M1 1L5 5L9 1" fill="none" stroke="#555" stroke-width="1"/></svg>
<div class="a" style="left:1077px;top:646px;font-size:13px">備註</div>
<div class="a" style="left:1077px;top:665px;width:244px;height:151px;background:#fff;border:1px solid #e2e2e2;border-bottom:1px solid #8a8a8a;border-radius:2px"></div>
<div class="a" style="left:1303px;top:666px;width:17px;height:148px;background:#f0f0f0"></div>
<svg width="10" height="8" style="left:1306px;top:671px"><path d="M1 7L5 2L9 7Z" fill="#a3a3a3"/></svg>
<svg width="10" height="8" style="left:1306px;top:801px"><path d="M1 1L5 6L9 1Z" fill="#a3a3a3"/></svg>
<div class="a" style="left:1080px;top:669px;font-size:13px;color:#999">在此圖表加入備註...</div>
<div class="a" style="left:1065px;top:845px;width:262px;height:1px;background:#a0a0a0"></div>
<svg width="8" height="10" style="left:1066px;top:862px"><path d="M1.5 1L5.5 5L1.5 9" fill="none" stroke="#8a8a8a" stroke-width="1.4"/></svg>
<div class="a" style="left:1078px;top:858px;font-size:15px;font-weight:bold;color:#9a9a9a">圖例</div>

</body></html>
